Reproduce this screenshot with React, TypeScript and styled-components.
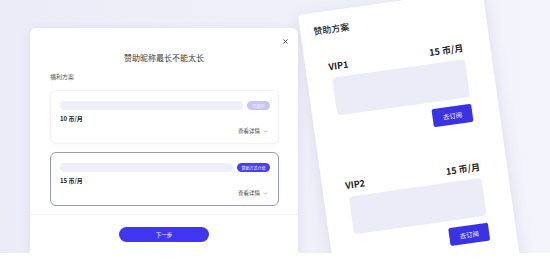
import React from 'react'
import styled, { createGlobalStyle } from 'styled-components'
import { X, ChevronDown } from 'lucide-react'

const GlobalStyle = createGlobalStyle`
  body {
    margin: 0;
    background: #ffffff;
    font-family: 'Noto Sans CJK SC', 'Noto Sans', sans-serif;
  }
`

const Stage = styled.div`
  display: flex;
  align-items: flex-start;
  width: 550px;
  height: 253px;
  padding-left: 30px;
  box-sizing: border-box;
  overflow: hidden;
  background: linear-gradient(90deg, #ececf8 0%, #f0f0fa 55%, #f4f4fc 100%);
`

const Modal = styled.div`
  position: relative;
  z-index: 2;
  display: flex;
  flex-direction: column;
  flex-shrink: 0;
  width: 268px;
  height: 225px;
  margin-top: 28px;
  background: #ffffff;
  border-radius: 6px 6px 0 0;
  box-shadow: 0 2px 10px rgba(90, 90, 150, 0.12);
`

const Close = styled.span`
  position: absolute;
  top: 10px;
  right: 9px;
  display: flex;
  color: #333;
`

const Title = styled.h2`
  margin: 25px 0 0;
  font-size: 8px;
  line-height: 10px;
  font-weight: 400;
  text-align: center;
  color: #3a3a3a;
`

const Label = styled.p`
  margin: 10px 0 0 20px;
  font-size: 6px;
  line-height: 8px;
  color: #555;
`

const Option = styled.div<{ $active?: boolean }>`
  margin: ${({ $active }) => ($active ? '8px' : '9px')} 0 0 20px;
  width: 229px;
  box-sizing: border-box;
  padding: 10px 8px 8px 9px;
  border: 1px solid ${({ $active }) => ($active ? '#9898c6' : '#f3f3f7')};
  border-radius: 6px;
  box-shadow: ${({ $active }) => ($active ? 'none' : '0 1px 4px rgba(120, 120, 170, 0.05)')};
`

const BarRow = styled.div`
  display: flex;
  align-items: center;
  gap: 4px;
`

const Bar = styled.div`
  flex: 1;
  height: 9px;
  border-radius: 4px;
  background: #efeefb;
`

const Pill = styled.span<{ $active?: boolean }>`
  display: flex;
  align-items: center;
  justify-content: center;
  width: ${({ $active }) => ($active ? '33px' : '23px')};
  height: 9px;
  border-radius: 5px;
  font-size: 4px;
  color: #ffffff;
  background: ${({ $active }) => ($active ? '#4a3fee' : '#c9c4f6')};
`

const Price = styled.p`
  margin: 5px 0 0;
  font-size: 6px;
  line-height: 8px;
  font-weight: 700;
  color: #222;
`

const Details = styled.div`
  display: flex;
  justify-content: flex-end;
  align-items: center;
  gap: 3px;
  margin-top: 4px;
  padding-right: 2px;
  font-size: 5.5px;
  line-height: 8px;
  color: #444;
`

const Footer = styled.div`
  display: flex;
  justify-content: center;
  margin-top: 8px;
  padding-top: 12px;
  border-top: 1px solid #f1f1f5;
`

const NextButton = styled.button`
  width: 90px;
  height: 15px;
  padding: 0;
  border: none;
  border-radius: 8px;
  background: #4136f0;
  color: #ffffff;
  font-family: inherit;
  font-size: 5.5px;
`

const PlanCard = styled.div`
  position: relative;
  z-index: 1;
  flex-shrink: 0;
  width: 186px;
  height: 290px;
  margin-top: 15px;
  box-sizing: border-box;
  padding: 13px 0 0 13px;
  background: #ffffff;
  border-radius: 4px;
  box-shadow: 0 4px 16px rgba(90, 90, 150, 0.14);
  transform: rotate(-8deg);
  transform-origin: 0 0;
`

const CardTitle = styled.h3`
  margin: 0;
  font-size: 9px;
  line-height: 12px;
  font-weight: 500;
  color: #222;
`

const Plan = styled.div<{ $first?: boolean }>`
  width: 136px;
  margin: ${({ $first }) => ($first ? '23px' : '38px')} 0 0 10px;
`

const PlanHead = styled.div`
  display: flex;
  justify-content: space-between;
  align-items: center;
  height: 14px;
  font-size: 9px;
  font-weight: 700;
  color: #222;
`

const PlanBox = styled.div`
  height: 38px;
  margin: 5px 0 0 2px;
  border-radius: 4px;
  background: #ececf8;
`

const SubscribeRow = styled.div`
  display: flex;
  justify-content: flex-end;
  margin-top: 7px;
`

const Subscribe = styled.button`
  width: 40px;
  height: 18px;
  padding: 0;
  border: none;
  border-radius: 2px;
  background: #3a33e4;
  color: #ffffff;
  font-family: inherit;
  font-size: 6.5px;
`

const options = [
  { price: '10 币/月', tag: '已选中', active: false },
  { price: '15 币/月', tag: '赞助方式介绍', active: true },
]

const plans = [
  { name: 'VIP1', price: '15 币/月' },
  { name: 'VIP2', price: '15 币/月' },
]

export default function App() {
  return (
    <>
      <GlobalStyle />
      <Stage>
        <Modal>
          <Close>
            <X size={7} strokeWidth={3} />
          </Close>
          <Title>赞助昵称最长不能太长</Title>
          <Label>福利方案</Label>
          {options.map((o) => (
            <Option key={o.price} $active={o.active}>
              <BarRow>
                <Bar />
                <Pill $active={o.active}>{o.tag}</Pill>
              </BarRow>
              <Price>{o.price}</Price>
              <Details>
                查看详情
                <ChevronDown size={5} strokeWidth={2} />
              </Details>
            </Option>
          ))}
          <Footer>
            <NextButton>下一步</NextButton>
          </Footer>
        </Modal>
        <PlanCard>
          <CardTitle>赞助方案</CardTitle>
          {plans.map((p, i) => (
            <Plan key={p.name} $first={i === 0}>
              <PlanHead>
                <span>{p.name}</span>
                <span>{p.price}</span>
              </PlanHead>
              <PlanBox />
              <SubscribeRow>
                <Subscribe>去订阅</Subscribe>
              </SubscribeRow>
            </Plan>
          ))}
        </PlanCard>
      </Stage>
    </>
  )
}
